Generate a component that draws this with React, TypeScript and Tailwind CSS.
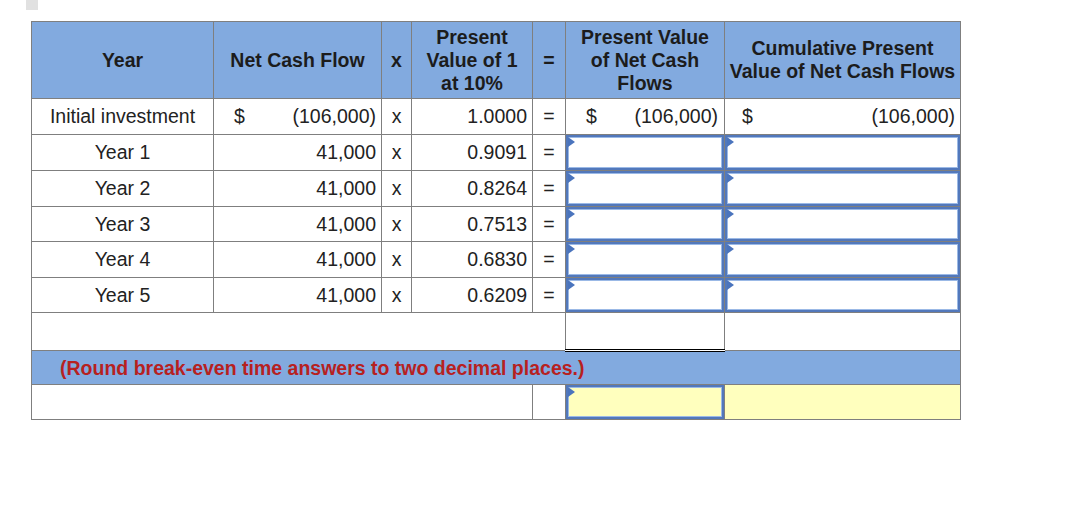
import React from 'react'

const rows = [
  { label: 'Year 1', factor: '0.9091', h: 'h-[36px]' },
  { label: 'Year 2', factor: '0.8264', h: 'h-[36px]' },
  { label: 'Year 3', factor: '0.7513', h: 'h-[35px]' },
  { label: 'Year 4', factor: '0.6830', h: 'h-[36px]' },
  { label: 'Year 5', factor: '0.6209', h: 'h-[35px]' },
]

const line = 'border border-[#7f7f7f] align-middle'
const cell = `${line} px-[5px] py-0`
const boxCell = `${line} h-[inherit] p-0`

function InputBox({ yellow = false }: { yellow?: boolean }) {
  return (
    <div
      className={`relative h-full w-full border-2 border-[#5278bb] shadow-[inset_0_0_0_1px_#9bb9e6] ${
        yellow ? 'bg-[#ffffbe]' : 'bg-white'
      }`}
    >
      <span className="absolute left-0 top-0 h-0 w-0 border-y-[5px] border-l-[7px] border-y-transparent border-l-[#4a74bd]" />
    </div>
  )
}

export default function App() {
  return (
    <div className="min-h-[520px] w-[1076px] bg-white font-['Liberation_Sans',Arial,sans-serif] text-[19.5px] leading-[23px] text-[#222]">
      <div className="ml-[26px] h-[10px] w-[12px] bg-[#e1e1e1]" />
      <table className="ml-[31px] mt-[11px] w-[929px] table-fixed border-collapse">
        <colgroup>
          <col className="w-[182px]" />
          <col className="w-[168px]" />
          <col className="w-[30px]" />
          <col className="w-[121px]" />
          <col className="w-[33px]" />
          <col className="w-[159px]" />
          <col className="w-[236px]" />
        </colgroup>
        <thead>
          <tr className="h-[77px] bg-[#82aadf] font-bold text-[#1c1c1c]">
            <th className={`${cell} text-center`}>Year</th>
            <th className={`${cell} text-center`}>Net Cash Flow</th>
            <th className={`${line} text-center`}>x</th>
            <th className={`${line} text-center whitespace-nowrap`}>
              Present
              <br />
              Value of 1
              <br />
              at 10%
            </th>
            <th className={`${line} text-center`}>=</th>
            <th className={`${line} text-center whitespace-nowrap`}>
              Present Value
              <br />
              of Net Cash
              <br />
              Flows
            </th>
            <th className={`${line} text-center whitespace-nowrap`}>
              Cumulative Present
              <br />
              Value of Net Cash Flows
            </th>
          </tr>
        </thead>
        <tbody>
          <tr className="h-[36px]">
            <td className={`${cell} text-center`}>Initial investment</td>
            <td className={cell}>
              <div className="flex justify-between pl-[15px]">
                <span>$</span>
                <span>(106,000)</span>
              </div>
            </td>
            <td className={`${line} text-center`}>x</td>
            <td className={`${cell} text-right`}>1.0000</td>
            <td className={`${line} text-center`}>=</td>
            <td className={cell}>
              <div className="flex justify-between pl-[15px] pr-px">
                <span>$</span>
                <span>(106,000)</span>
              </div>
            </td>
            <td className={cell}>
              <div className="flex justify-between pl-[12px]">
                <span>$</span>
                <span>(106,000)</span>
              </div>
            </td>
          </tr>
          {rows.map((r) => (
            <tr key={r.label} className={r.h}>
              <td className={`${cell} text-center`}>{r.label}</td>
              <td className={`${cell} text-right`}>41,000</td>
              <td className={`${line} text-center`}>x</td>
              <td className={`${cell} text-right`}>{r.factor}</td>
              <td className={`${line} text-center`}>=</td>
              <td className={boxCell}>
                <InputBox />
              </td>
              <td className={boxCell}>
                <InputBox />
              </td>
            </tr>
          ))}
          <tr className="h-[38px]">
            <td colSpan={5} className={cell} />
            <td className={`${cell} border-b-[3px] border-b-black border-double`} />
            <td className={cell} />
          </tr>
          <tr className="h-[34px] bg-[#82aadf]">
            <td colSpan={7} className={`${line} pl-[28px] font-bold text-[#b7211f]`}>
              (Round break-even time answers to two decimal places.)
            </td>
          </tr>
          <tr className="h-[35px]">
            <td colSpan={4} className={cell} />
            <td className={cell} />
            <td className={boxCell}>
              <InputBox yellow />
            </td>
            <td className={`${cell} bg-[#ffffbe]`} />
          </tr>
        </tbody>
      </table>
    </div>
  )
}
